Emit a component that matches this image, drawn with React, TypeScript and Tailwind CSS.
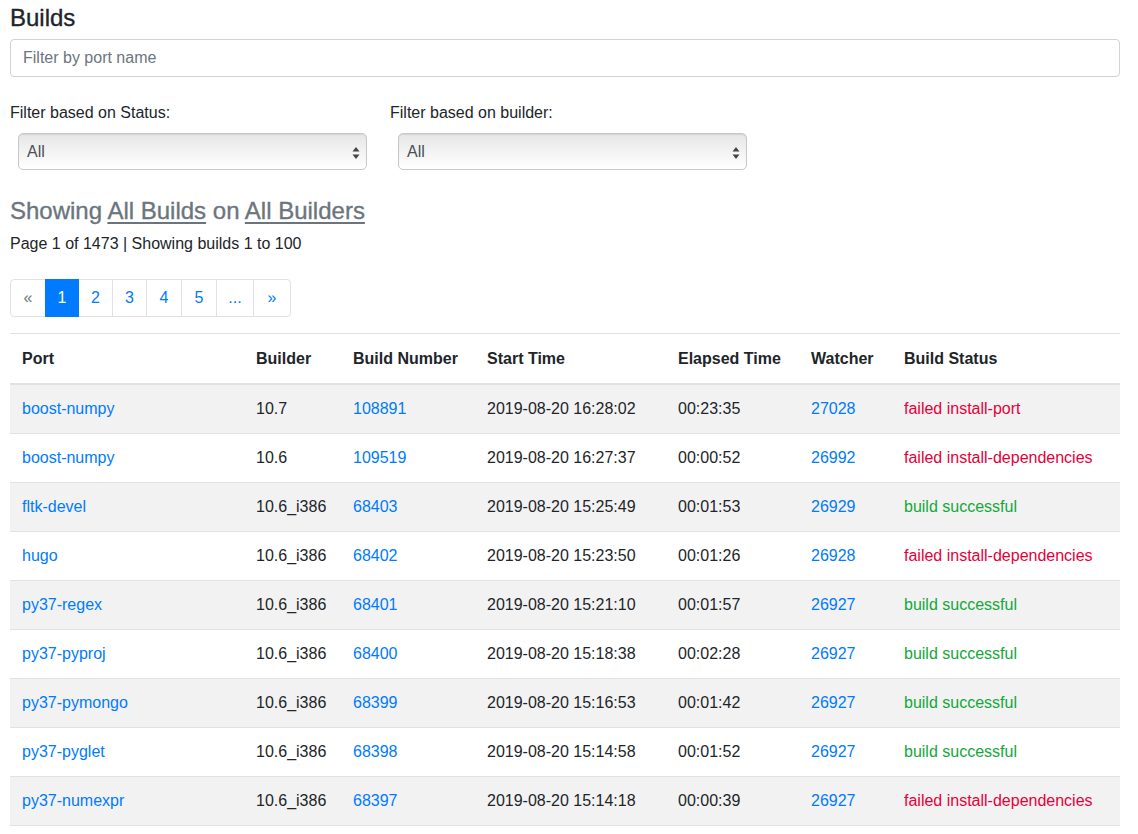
import React from "react";

type Row = {
  port: string;
  builder: string;
  build: string;
  start: string;
  elapsed: string;
  watcher: string;
  status: string;
  ok: boolean;
};

const rows: Row[] = [
  { port: "boost-numpy", builder: "10.7", build: "108891", start: "2019-08-20 16:28:02", elapsed: "00:23:35", watcher: "27028", status: "failed install-port", ok: false },
  { port: "boost-numpy", builder: "10.6", build: "109519", start: "2019-08-20 16:27:37", elapsed: "00:00:52", watcher: "26992", status: "failed install-dependencies", ok: false },
  { port: "fltk-devel", builder: "10.6_i386", build: "68403", start: "2019-08-20 15:25:49", elapsed: "00:01:53", watcher: "26929", status: "build successful", ok: true },
  { port: "hugo", builder: "10.6_i386", build: "68402", start: "2019-08-20 15:23:50", elapsed: "00:01:26", watcher: "26928", status: "failed install-dependencies", ok: false },
  { port: "py37-regex", builder: "10.6_i386", build: "68401", start: "2019-08-20 15:21:10", elapsed: "00:01:57", watcher: "26927", status: "build successful", ok: true },
  { port: "py37-pyproj", builder: "10.6_i386", build: "68400", start: "2019-08-20 15:18:38", elapsed: "00:02:28", watcher: "26927", status: "build successful", ok: true },
  { port: "py37-pymongo", builder: "10.6_i386", build: "68399", start: "2019-08-20 15:16:53", elapsed: "00:01:42", watcher: "26927", status: "build successful", ok: true },
  { port: "py37-pyglet", builder: "10.6_i386", build: "68398", start: "2019-08-20 15:14:58", elapsed: "00:01:52", watcher: "26927", status: "build successful", ok: true },
  { port: "py37-numexpr", builder: "10.6_i386", build: "68397", start: "2019-08-20 15:14:18", elapsed: "00:00:39", watcher: "26927", status: "failed install-dependencies", ok: false },
];

function SelectBox() {
  return (
    <div className="relative ml-2 w-[349px] h-[37px] rounded-[5px] border border-[#c8c8c8] bg-gradient-to-b from-[#e6e6e6] via-[#f3f3f3] to-[#ffffff] shadow-[inset_0_1px_1px_rgba(0,0,0,0.08)] flex items-center pl-[8px] text-[16px] text-[#495057]">
      All
      <svg className="absolute right-[6px] top-[13px]" width="8" height="12" viewBox="0 0 8 12">
        <path d="M4 0 L7.5 4.5 L0.5 4.5 Z" fill="#444" />
        <path d="M4 12 L7.5 7.5 L0.5 7.5 Z" fill="#444" />
      </svg>
    </div>
  );
}

const pages = [
  { t: "«", w: 36, cls: "text-[#6c757d]" },
  { t: "1", w: 34, active: true },
  { t: "2", w: 35 },
  { t: "3", w: 35 },
  { t: "4", w: 36 },
  { t: "5", w: 36 },
  { t: "...", w: 38 },
  { t: "»", w: 38 },
];

export default function App() {
  return (
    <div className="pl-[10px] pr-[18px] pt-[3px] text-[16px] leading-[24px] text-[#212529] bg-white" style={{ fontFamily: '"Liberation Sans", Arial, sans-serif' }}>
      <h4 className="text-[24px] leading-[29px] font-normal [-webkit-text-stroke:0.35px_#212529] mb-[7px]">Builds</h4>
      <div className="h-[38px] rounded-[4px] border border-[#ced4da] flex items-center px-[12px] text-[#6c757d]">
        Filter by port name
      </div>

      <div className="flex mt-[24px]">
        <div className="w-[380px]">
          <div className="mb-[8px]">Filter based on Status:</div>
          <SelectBox />
        </div>
        <div className="w-[380px]">
          <div className="mb-[8px]">Filter based on builder:</div>
          <SelectBox />
        </div>
      </div>

      <h4 className="mt-[26px] text-[24px] leading-[29px] font-normal text-[#6c757d] [-webkit-text-stroke:0.35px_#6c757d]">
        Showing <span className="underline underline-offset-[3px] decoration-[1.5px]">All Builds</span> on{" "}
        <span className="underline underline-offset-[3px] decoration-[1.5px]">All Builders</span>
      </h4>
      <p className="mt-[7px]">Page 1 of 1473 | Showing builds 1 to 100</p>

      <div className="mt-[23px] flex">
        {pages.map((p, i) => (
          <div
            key={i}
            className={
              "h-[38px] flex items-center justify-center border leading-[20px] " +
              (i === 0 ? "rounded-l-[4px] " : "-ml-px ") +
              (i === pages.length - 1 ? "rounded-r-[4px] " : "") +
              (p.active
                ? "bg-[#007bff] border-[#007bff] text-white relative z-10"
                : "bg-white border-[#dee2e6] " + (p.cls ? p.cls : "text-[#007bff]"))
            }
            style={{ width: p.w }}
          >
            {p.t}
          </div>
        ))}
      </div>

      <table className="mt-[16px] w-full table-fixed border-collapse">
        <colgroup>
          <col className="w-[234px]" />
          <col className="w-[97px]" />
          <col className="w-[134px]" />
          <col className="w-[191px]" />
          <col className="w-[133px]" />
          <col className="w-[93px]" />
          <col />
        </colgroup>
        <thead>
          <tr className="border-t border-[#dee2e6] border-b-2 border-b-[#dee2e6]">
            {["Port", "Builder", "Build Number", "Start Time", "Elapsed Time", "Watcher", "Build Status"].map((h) => (
              <th key={h} className="text-left font-bold px-[12px] pt-[13px] pb-[12px] whitespace-nowrap">
                {h}
              </th>
            ))}
          </tr>
        </thead>
        <tbody>
          {rows.map((r, i) => (
            <tr key={i} className={"border-t border-b border-[#dee2e6] " + (i % 2 === 0 ? "bg-[#f2f2f2]" : "bg-white")}>
              <td className="px-[12px] py-[12px] text-[#007bff] whitespace-nowrap">{r.port}</td>
              <td className="px-[12px] py-[12px] whitespace-nowrap">{r.builder}</td>
              <td className="px-[12px] py-[12px] text-[#007bff] whitespace-nowrap">{r.build}</td>
              <td className="px-[12px] py-[12px] whitespace-nowrap">{r.start}</td>
              <td className="px-[12px] py-[12px] whitespace-nowrap">{r.elapsed}</td>
              <td className="px-[12px] py-[12px] text-[#007bff] whitespace-nowrap">{r.watcher}</td>
              <td className={"px-[12px] py-[12px] whitespace-nowrap " + (r.ok ? "text-[#12a83a]" : "text-[#e6003a]")}>{r.status}</td>
            </tr>
          ))}
        </tbody>
      </table>
    </div>
  );
}
